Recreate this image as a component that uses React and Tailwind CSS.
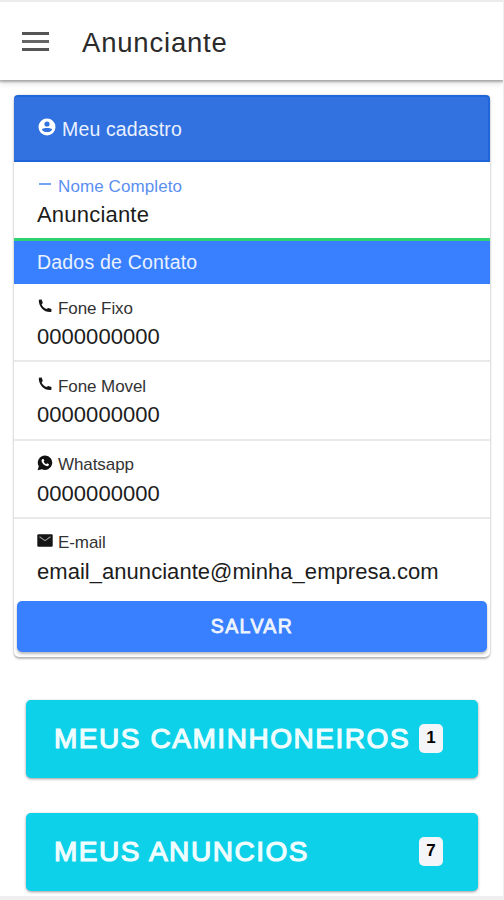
import React from 'react';

const PhoneIcon = () => (
  <svg viewBox="0 0 14 14" className="w-[14px] h-[14px]" fill="#151515">
    <path d="M0.8 0.7 L3.7 0.4 L4.8 3.9 L3.6 5.5 C4.6 7.5 6.3 9.2 8.4 10.1 L10.2 9 L13.5 10 L13.3 13 C6.3 13.8 0.5 7.8 0.8 0.7 Z" />
  </svg>
);

const WhatsappIcon = () => (
  <svg viewBox="0 0 16 16" className="w-4 h-4">
    <path d="M8.2 0.5 A7.2 7.2 0 1 1 4.9 14.2 L0.6 15.3 L1.8 11.3 A7.2 7.2 0 0 1 8.2 0.5 Z" fill="#111" />
    <path d="M5.5 4 L6.6 4 L7.3 5.8 L6.7 6.8 C7.3 8 8.1 8.7 9.3 9.2 L10.2 8.3 L12 9.2 C11.9 10.8 10.7 11.4 9.5 11.1 C7 10.5 5.2 8.5 4.6 6.3 C4.4 5.3 4.8 4.4 5.5 4 Z" fill="#fff" />
  </svg>
);

const MailIcon = () => (
  <svg viewBox="0 0 16 13" className="w-4 h-[13px]">
    <rect x="0.3" y="0.3" width="15.4" height="12.4" rx="1.2" fill="#151515" />
    <path d="M2.5 2.8 L8 6.6 L13.5 2.8" fill="none" stroke="#999" strokeWidth="1.1" />
  </svg>
);

const PersonIcon = () => (
  <svg viewBox="0 0 18 18" className="w-[18px] h-[18px]">
    <circle cx="9" cy="9" r="8.5" fill="#fff" />
    <circle cx="9" cy="6" r="2.6" fill="#3171e0" />
    <path d="M3.8 11.4 C4.2 9.4 13.8 9.4 14.2 11.4 C13 14.8 5 14.8 3.8 11.4 Z" fill="#3171e0" />
  </svg>
);

const contacts = [
  { label: 'Fone Fixo', value: '0000000000', icon: <PhoneIcon /> },
  { label: 'Fone Movel', value: '0000000000', icon: <PhoneIcon /> },
  { label: 'Whatsapp', value: '0000000000', icon: <WhatsappIcon /> },
  { label: 'E-mail', value: 'email_anunciante@minha_empresa.com', icon: <MailIcon /> }
];

const menus = [
  { title: 'MEUS CAMINHONEIROS', count: 1 },
  { title: 'MEUS ANUNCIOS', count: 7 }
];

const App = () => {
  return (
    <div className="h-[900px] w-[504px] overflow-hidden flex flex-col bg-white border-r border-[#eeeeee] font-['Liberation_Sans',Arial,sans-serif]">
      <header className="relative h-[80px] shrink-0 flex items-center border-t-2 border-[#ececec] bg-white pl-[22px] pt-[3px] shadow-[0_1px_2px_1px_rgba(0,0,0,0.28),0_4px_6px_rgba(0,0,0,0.1)]">
        <button className="flex flex-col gap-[5px] w-[27px] -mt-[2px]">
          <span className="block w-full h-[3px] bg-[#555]" />
          <span className="block w-full h-[3px] bg-[#666]" />
          <span className="block w-full h-[3px] bg-[#555]" />
        </button>
        <h1 className="ml-[33px] text-[27.5px] leading-none tracking-[0.8px] text-[#2b2b2b] mt-px">Anunciante</h1>
      </header>

      <main className="flex-1 flex flex-col pt-[15px]">
        {/* Cadastro */}
        <section className="ml-[14px] w-[476px] h-[562px] shrink-0 flex flex-col rounded-[5px] bg-white shadow-[0_2px_2px_rgba(0,0,0,0.24),0_0_3px_rgba(0,0,0,0.18)]">
          <div className="h-[67px] flex items-center pl-[24px] pt-[3px] rounded-t-[4px] bg-[#3171e0] border-y-2 border-r-2 border-[#1e66d9]">
            <div className="-mt-[6px]"><PersonIcon /></div>
            <span className="ml-[6px] text-[19.5px] leading-none tracking-[0.15px] text-[#e9f0ff]">Meu cadastro</span>
          </div>

          <div className="h-[79px] pl-[23px] pt-[14px] border-b-[3px] border-[#2dd36f]">
            <div className="flex items-center h-[20px] text-[#5b8ff0]">
              <span className="ml-[2px] mr-[7px] -mt-[4px] w-[12px] h-[2px] bg-[#75a2f4]" />
              <span className="text-[17px] leading-none tracking-[0.1px]">Nome Completo</span>
            </div>
            <div className="mt-[8px] text-[22px] leading-[22px] tracking-[0.2px] text-[#1c1c1c]">Anunciante</div>
          </div>

          <div className="h-[43px] flex items-center pl-[23px] bg-[#3880ff] text-[19.5px] leading-none tracking-[0.2px] text-[#eaf1ff]">
            Dados de Contato
          </div>

          {contacts.map((item) => (
            <div key={item.label} className="h-[78.3px] pl-[23px] pt-[14px] border-b-2 border-[#e9e9e9] last-of-type:border-transparent">
              <div className="flex items-center h-[20px]">
                <div className="w-[16px] mr-[5px] -mt-[4px] flex justify-center">{item.icon}</div>
                <span className="text-[17px] leading-none tracking-[-0.08px] text-[#333]">{item.label}</span>
              </div>
              <div className="mt-[8px] text-[22px] leading-[22px] tracking-[0.04px] text-[#1c1c1c]">{item.value}</div>
            </div>
          ))}

          <button className="mt-[4px] mx-[3px] h-[51px] rounded-[5px] bg-[#3880ff] text-[19.5px] leading-none tracking-[1.4px] text-[#eef4ff] [-webkit-text-stroke:0.8px_#eef4ff] shadow-[0_2px_3px_rgba(0,0,0,0.28)]">
            SALVAR
          </button>
        </section>

        {/* Atalhos */}
        <nav className="mt-[43px] ml-[26px] w-[452px] flex flex-col gap-[35px]">
          {menus.map((menu) => (
            <button key={menu.title} className="h-[78px] flex items-center justify-between pl-[28px] pr-[35px] rounded-[5px] bg-[#0cd1e8] shadow-[0_1px_3px_rgba(0,0,0,0.4)]">
              <span className="text-[28px] leading-none tracking-[1.55px] text-[#effdff] whitespace-nowrap [-webkit-text-stroke:1.2px_#effdff]">{menu.title}</span>
              <span className="w-[24px] h-[29px] shrink-0 flex items-center justify-center rounded-[5px] bg-[#f4f5f8] pb-px -mt-[2px] text-[17px] leading-none font-bold text-black">{menu.count}</span>
            </button>
          ))}
        </nav>
        <div className="mt-auto h-[4px] bg-[#efefef]" />
      </main>
    </div>
  );
};

export default App;
